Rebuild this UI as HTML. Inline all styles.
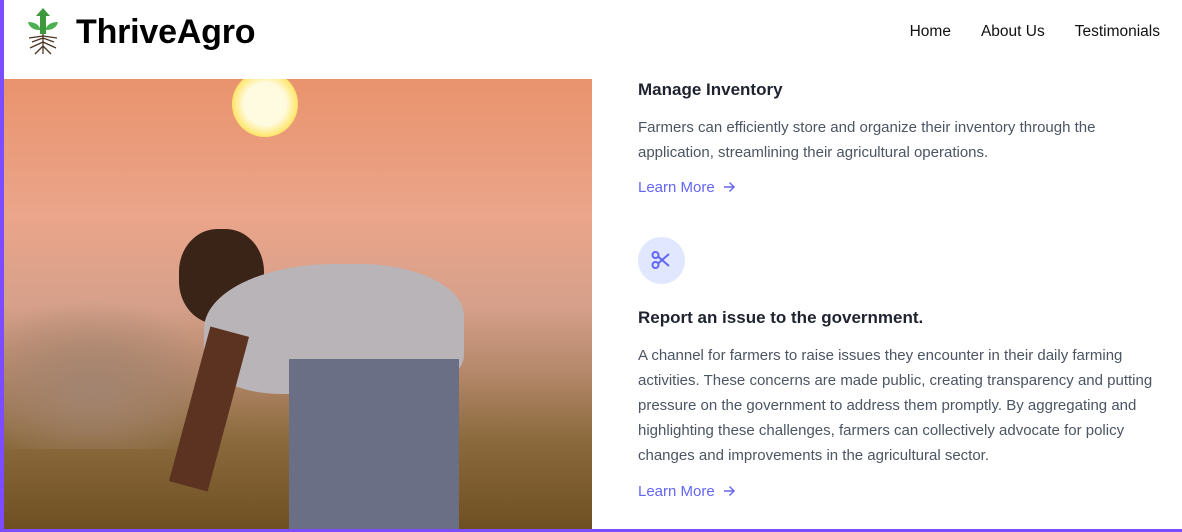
<!DOCTYPE html>
<html><head><meta charset="utf-8"><style>
*{margin:0;padding:0;box-sizing:border-box}
body{width:1182px;height:532px;overflow:hidden;background:#fff;font-family:"Liberation Sans",sans-serif;position:relative}
.lb{position:absolute;left:0;top:0;width:4px;height:532px;background:#7c4dff}
.bb{position:absolute;left:0;bottom:0;width:1182px;height:3px;background:#7c4dff}
.logo{position:absolute;left:76px;top:13px;font-size:34px;font-weight:bold;color:#000;letter-spacing:-0.2px}
nav{position:absolute;top:23px;right:22px;font-size:15.5px;color:#111}
nav span{margin-left:30px}
.img{position:absolute;left:4px;top:79px;width:588px;height:453px;overflow:hidden;
background:linear-gradient(180deg,#e9936d 0%,#eba58a 30%,#d6a08a 50%,#b4876a 65%,#8a6a3c 80%,#6e4f22 100%)}
h3{position:absolute;left:638px;font-size:17px;font-weight:bold;color:#1f2330}
p{position:absolute;left:638px;width:525px;font-size:15px;line-height:25px;color:#4b5563}
.lm{position:absolute;left:638px;font-size:15px;color:#6366f1}
.lm svg{vertical-align:-1px;margin-left:8px}
.ic{position:absolute;left:638px;top:237px;width:47px;height:47px;border-radius:50%;background:#e0e7ff}
</style></head><body>
<div class="lb"></div>
<svg style="position:absolute;left:26px;top:6px" width="34" height="50" viewBox="0 0 34 50">
<path d="M17 2 L10 10 H14 V28 H20 V10 H24 Z" fill="#3c9a3c"/>
<path d="M14 24 C6 24 3 20 2 16 C8 16 12 18 14 22Z" fill="#4caf50"/>
<path d="M20 24 C28 24 31 20 32 16 C26 16 22 18 20 22Z" fill="#4caf50"/>
<path d="M17 28 V48 M17 32 L6 36 M17 32 L28 36 M17 36 L4 42 M17 36 L30 42 M17 40 L9 48 M17 40 L25 48 M17 30 L3 32 M17 30 L31 32" stroke="#4a3524" stroke-width="1.3" fill="none"/>
</svg>
<div class="logo">ThriveAgro</div>
<nav><span>Home</span><span>About Us</span><span>Testimonials</span></nav>
<div class="img">
<div style="position:absolute;left:228px;top:-8px;width:66px;height:66px;border-radius:50%;background:radial-gradient(circle,#fffbe0 45%,#ffe56a 70%,#f5b86a 100%)"></div>
<div style="position:absolute;left:0;top:220px;width:220px;height:150px;background:radial-gradient(ellipse at 40% 60%,#a28470 0%,transparent 70%)"></div>
<div style="position:absolute;left:175px;top:150px;width:85px;height:95px;border-radius:45%;background:#3a2418"></div>
<div style="position:absolute;left:200px;top:185px;width:260px;height:130px;border-radius:50% 40% 30% 30%;background:#b9b4b8"></div>
<div style="position:absolute;left:285px;top:280px;width:170px;height:180px;background:#6a6f86"></div>
<div style="position:absolute;left:185px;top:250px;width:40px;height:160px;background:#5b3320;transform:rotate(15deg)"></div>
</div>
<h3 style="top:80px">Manage Inventory</h3>
<p style="top:115px">Farmers can efficiently store and organize their inventory through the application, streamlining their agricultural operations.</p>
<div class="lm" style="top:179px">Learn More<svg width="12" height="12" viewBox="0 0 12 12" fill="none" stroke="#6366f1" stroke-width="1.4"><path d="M1 6H11M6.5 1.5L11 6L6.5 10.5"/></svg></div>
<div class="ic"><svg width="47" height="47" viewBox="0 0 47 47" fill="none" stroke="#6366f1" stroke-width="2"><circle cx="17.5" cy="18" r="3"/><circle cx="17.5" cy="28" r="3"/><path d="M20 19.5 L31 29 M20 26.5 L31 17"/></svg></div>
<h3 style="top:308px">Report an issue to the government.</h3>
<p style="top:343px">A channel for farmers to raise issues they encounter in their daily farming activities. These concerns are made public, creating transparency and putting pressure on the government to address them promptly. By aggregating and highlighting these challenges, farmers can collectively advocate for policy changes and improvements in the agricultural sector.</p>
<div class="lm" style="top:483px">Learn More<svg width="12" height="12" viewBox="0 0 12 12" fill="none" stroke="#6366f1" stroke-width="1.4"><path d="M1 6H11M6.5 1.5L11 6L6.5 10.5"/></svg></div>
<div class="bb"></div>
</body></html>
